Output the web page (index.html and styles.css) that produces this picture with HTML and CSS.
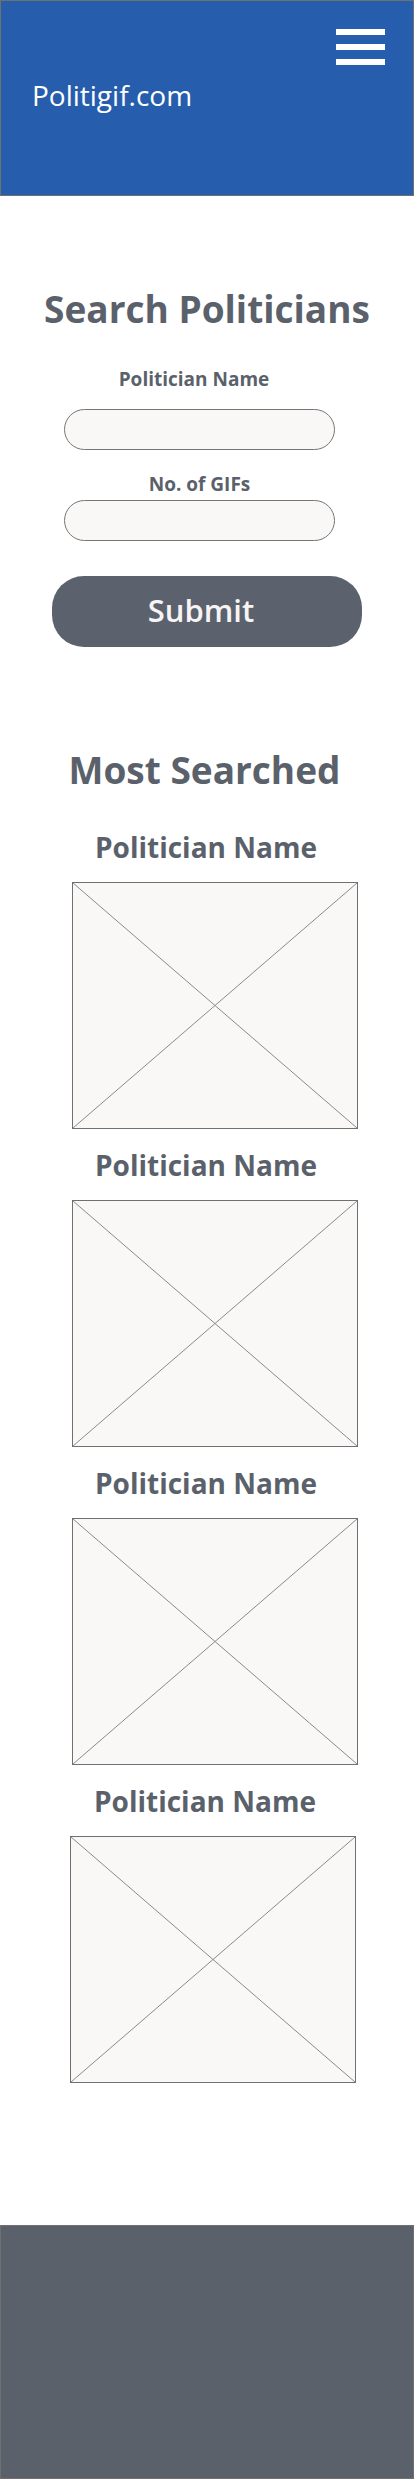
FILE: index.html
```html
<!DOCTYPE html>
<html lang="en">
<head>
<meta charset="utf-8">
<title>Politigif.com</title>
<link rel="stylesheet" href="styles.css">
</head>
<body>
<header class="site-header">
  <button class="menu-btn" aria-label="Menu"><span></span><span></span><span></span></button>
  <div class="logo">Politigif.com</div>
</header>
<main>
  <section class="search">
    <h1 class="search-title">Search Politicians</h1>
    <form class="search-form">
      <label class="field-label label-name" for="pname">Politician Name</label>
      <input class="field" id="pname" type="text">
      <label class="field-label label-count" for="pcount">No. of GIFs</label>
      <input class="field field-count" id="pcount" type="text">
    </form>
    <button class="submit-btn" type="button">Submit</button>
  </section>
  <section class="most">
    <h2 class="most-title">Most Searched</h2>
    <div class="card">
      <h3 class="card-title">Politician Name</h3>
      <div class="placeholder"><svg viewBox="0 0 100 100" preserveAspectRatio="none"><line x1="0" y1="0" x2="100" y2="100"/><line x1="100" y1="0" x2="0" y2="100"/></svg></div>
    </div>
    <div class="card">
      <h3 class="card-title">Politician Name</h3>
      <div class="placeholder"><svg viewBox="0 0 100 100" preserveAspectRatio="none"><line x1="0" y1="0" x2="100" y2="100"/><line x1="100" y1="0" x2="0" y2="100"/></svg></div>
    </div>
    <div class="card">
      <h3 class="card-title">Politician Name</h3>
      <div class="placeholder"><svg viewBox="0 0 100 100" preserveAspectRatio="none"><line x1="0" y1="0" x2="100" y2="100"/><line x1="100" y1="0" x2="0" y2="100"/></svg></div>
    </div>
    <div class="card card-last">
      <h3 class="card-title">Politician Name</h3>
      <div class="placeholder"><svg viewBox="0 0 100 100" preserveAspectRatio="none"><line x1="0" y1="0" x2="100" y2="100"/><line x1="100" y1="0" x2="0" y2="100"/></svg></div>
    </div>
  </section>
</main>
<footer class="site-footer"></footer>
</body>
</html>
```
FILE: styles.css
```css
* { box-sizing: border-box; }
html, body { margin: 0; padding: 0; background: #ffffff; }
body {
  width: 414px;
  font-family: "Open Sans", "Noto Sans", sans-serif;
  color: #5a616b;
}
h1, h2, h3 { margin: 0; }

.site-header {
  height: 196px;
  background: #265ead;
  border: 1px solid #707070;
  padding: 28px 28px 0 31px;
  display: flex;
  flex-direction: column;
}
.menu-btn {
  align-self: flex-end;
  width: 49px;
  padding: 0;
  border: 0;
  background: none;
  display: flex;
  flex-direction: column;
  gap: 9px;
}
.menu-btn span {
  display: block;
  height: 6px;
  background: #ffffff;
}
.logo {
  margin-top: 16px;
  font-size: 28px;
  line-height: 28px;
  color: #ffffff;
  font-weight: 400;
}

.search { display: flex; flex-direction: column; align-items: center; }
.search-title {
  margin-top: 94px;
  font-size: 37px;
  line-height: 37px;
  font-weight: 700;
  color: #5a616b;
}
.search-form {
  align-self: flex-start;
  margin-left: 64px;
  width: 271px;
  display: flex;
  flex-direction: column;
  align-items: center;
}
.field-label {
  font-size: 19px;
  line-height: 19px;
  font-weight: 700;
}
.label-name { margin-top: 43px; padding-right: 11px; }
.label-count { margin-top: 25px; }
.field {
  display: block;
  width: 271px;
  height: 41px;
  margin-top: 20px;
  border: 1px solid #767676;
  border-radius: 21px;
  background: #faf7f7;
}
.field-count { margin-top: 6px; }
.submit-btn {
  margin-top: 35px;
  width: 310px;
  height: 71px;
  border: 0;
  border-radius: 32px;
  background: #5b626d;
  color: #f7f4f5;
  font-family: "Open Sans", "Noto Sans", sans-serif;
  font-size: 31px;
  font-weight: 600;
  padding: 0 12px 4px 0;
}

.most { display: flex; flex-direction: column; align-items: center; }
.most-title {
  margin-top: 104px;
  margin-left: -5px;
  font-size: 37px;
  line-height: 37px;
  font-weight: 700;
}
.card { display: flex; flex-direction: column; align-items: center; }
.card:first-of-type { margin-top: 45px; }
.card-title {
  font-size: 28px;
  line-height: 28px;
  font-weight: 700;
  margin-left: -2px;
}
.placeholder {
  margin-top: 21px;
  margin-bottom: 22px;
  margin-left: 16px;
  width: 286px;
  height: 247px;
  border: 1px solid #707070;
  background: #faf7f7;
}
.card-last .card-title { margin-left: -4px; }
.card-last .placeholder { margin-left: 12px; }
.placeholder svg { display: block; width: 100%; height: 100%; }
.placeholder line { stroke: #8a8a8a; stroke-width: 1; vector-effect: non-scaling-stroke; }

.site-footer {
  margin-top: 120px;
  height: 254px;
  background: #5b616b;
  border: 1px solid #707070;
}
```
